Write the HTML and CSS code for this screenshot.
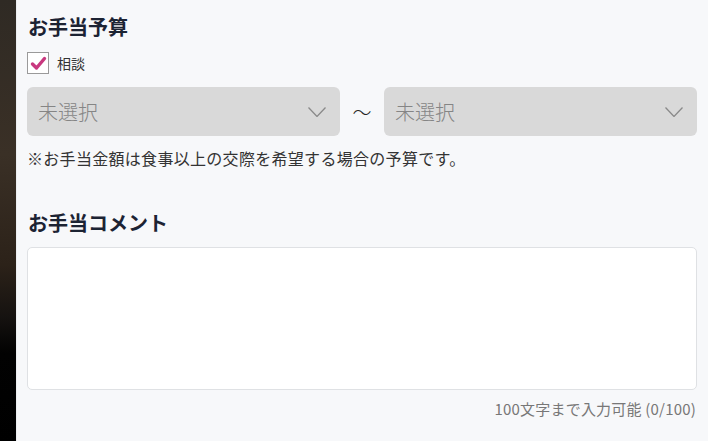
FILE: index.html
```html
<!DOCTYPE html>
<html lang="ja">
<head>
<meta charset="utf-8">
<link rel="stylesheet" href="styles.css">
</head>
<body>
<div class="page">
  <div class="backdrop"></div>
  <main class="panel">
    <h2 class="heading">お手当予算</h2>
    <label class="check-row">
      <span class="checkbox">
        <svg width="22" height="22" viewBox="0 0 22 22"><path d="M5.5 12 L9.5 16 L17.5 6.5" fill="none" stroke="#c8387f" stroke-width="3.4" stroke-linecap="round" stroke-linejoin="round"/></svg>
      </span>
      <span class="check-label">相談</span>
    </label>
    <div class="range">
      <div class="select">
        <span class="select-text">未選択</span>
        <svg class="chev" width="18" height="10" viewBox="0 0 18 10"><path d="M0.5 0.5 L9 9.5 L17.5 0.5" fill="none" stroke="#8a8a8a" stroke-width="1.3"/></svg>
      </div>
      <span class="tilde">〜</span>
      <div class="select">
        <span class="select-text">未選択</span>
        <svg class="chev" width="18" height="10" viewBox="0 0 18 10"><path d="M0.5 0.5 L9 9.5 L17.5 0.5" fill="none" stroke="#8a8a8a" stroke-width="1.3"/></svg>
      </div>
    </div>
    <p class="note">※お手当金額は食事以上の交際を希望する場合の予算です。</p>
    <h2 class="heading heading-2">お手当コメント</h2>
    <div class="textarea"></div>
    <p class="counter">100文字まで入力可能 (0/100)</p>
  </main>
</div>
</body>
</html>
```

FILE: styles.css
```css
* { box-sizing: border-box; }
html, body { margin: 0; padding: 0; }
body {
  font-family: "Noto Sans CJK JP", "Noto Sans", sans-serif;
  background: #f7f8fa;
}
.page {
  display: flex;
  width: 708px;
  height: 441px;
  overflow: hidden;
}
.backdrop {
  width: 16px;
  flex: none;
  background: linear-gradient(180deg, #2f2a24 0%, #3a3026 35%, #2c2219 60%, #151210 72%, #020202 80%, #000 100%);
}
.panel {
  flex: 1;
  background: #f7f8fa;
  border-left: 1px solid #eceef1;
  padding: 13px 11px 0 10px;
  display: flex;
  flex-direction: column;
}
.heading {
  margin: 0;
  font-size: 20px;
  line-height: 28px;
  font-weight: 700;
  color: #1c2333;
  padding-left: 1px;
}
.heading-2 { margin-top: 40px; }
.check-row {
  display: flex;
  align-items: center;
  margin-top: 11px;
  height: 22px;
}
.checkbox {
  width: 22px;
  height: 22px;
  border: 1.5px solid #9a9a9a;
  background: #fff;
  position: relative;
}
.checkbox svg { position: absolute; left: -1.5px; top: -1.5px; }
.check-label {
  margin-left: 8px;
  font-size: 14px;
  color: #333;
}
.range {
  display: flex;
  align-items: center;
  margin-top: 13px;
}
.select {
  flex: 1;
  height: 49px;
  background: #d9d9d9;
  border-radius: 6px;
  display: flex;
  align-items: center;
  justify-content: space-between;
  padding: 0 14px 0 11px;
}
.select-text {
  font-size: 20px;
  font-weight: 300;
  color: #858585;
}
.chev { display: block; }
.tilde {
  width: 44px;
  text-align: center;
  font-size: 19px;
  font-weight: 300;
  color: #222;
}
.note {
  margin: 11px 0 0;
  font-size: 16px;
  line-height: 22px;
  letter-spacing: 0.3px;
  color: #333;
}
.textarea {
  margin-top: 10px;
  height: 143px;
  background: #fff;
  border: 1px solid #dfe1e4;
  border-radius: 5px;
}
.counter {
  margin: 9px 0 0;
  text-align: right;
  font-size: 15px;
  line-height: 20px;
  letter-spacing: 0.2px;
  color: #777;
  padding-right: 1px;
}
```
